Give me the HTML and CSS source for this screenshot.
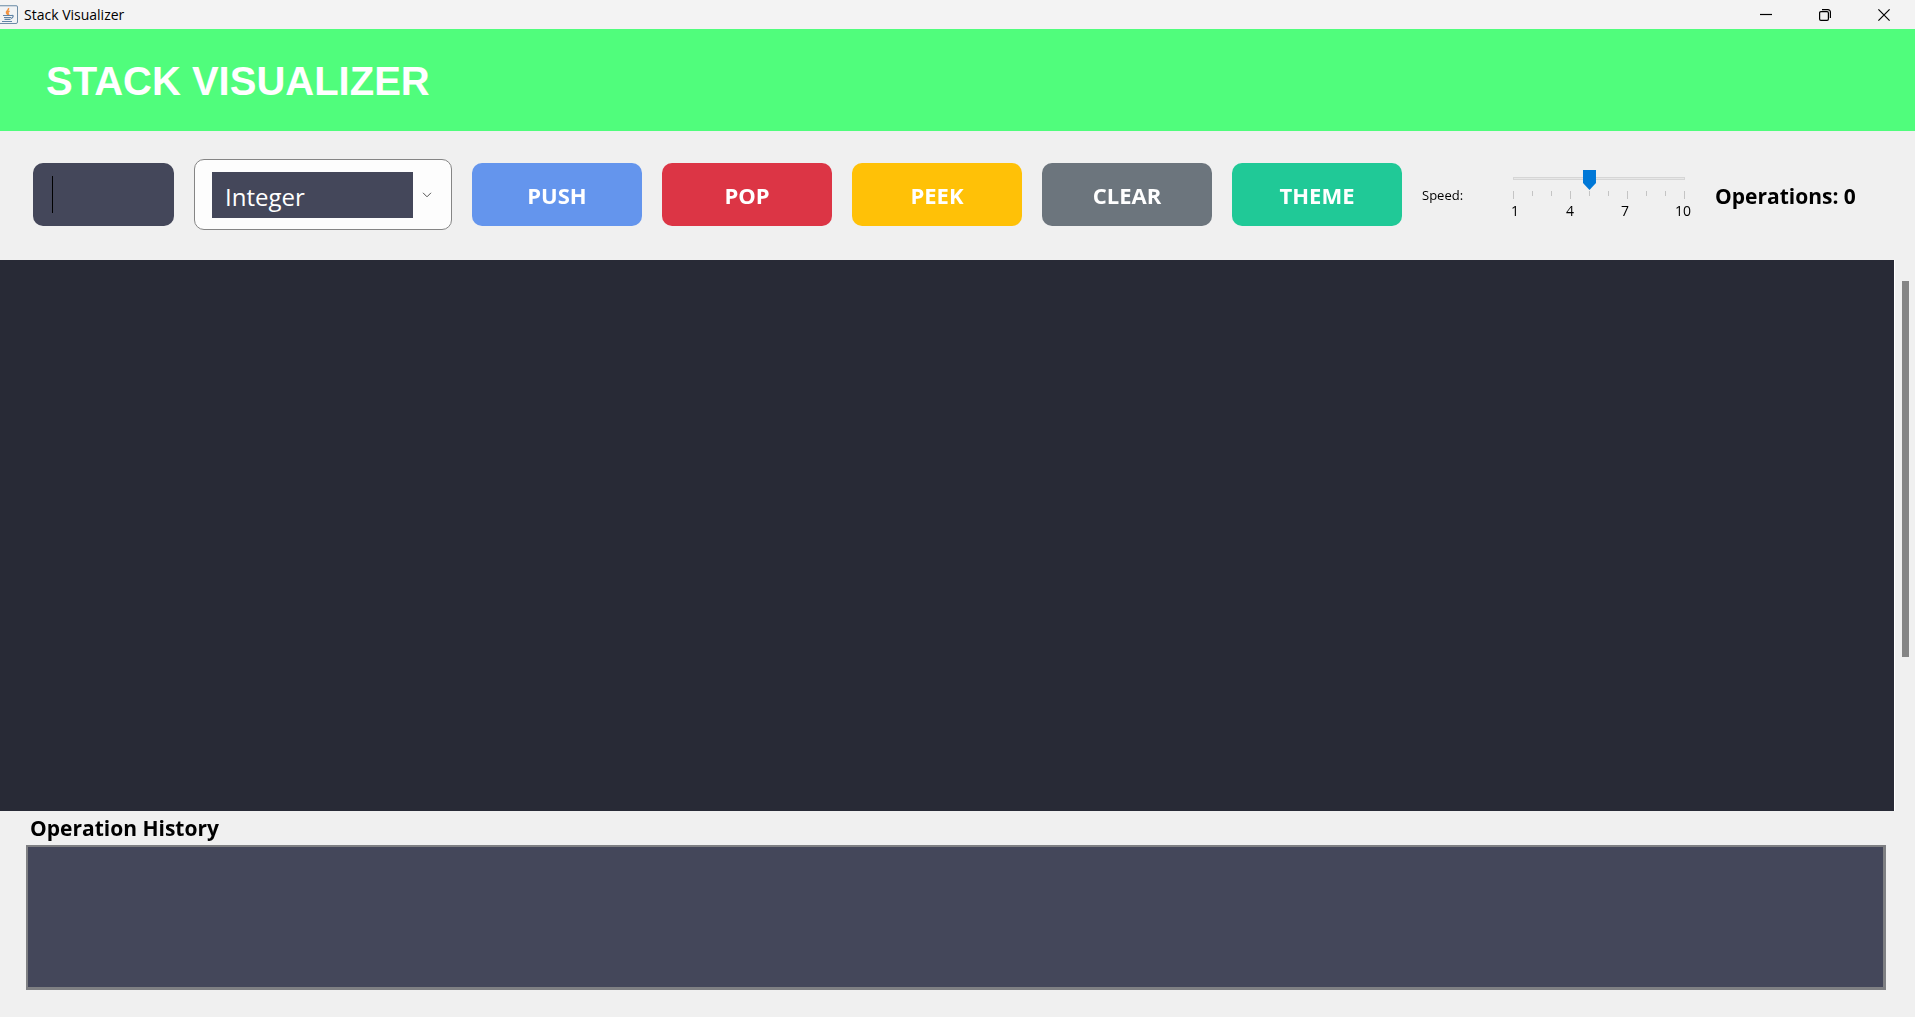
FILE: index.html
```html
<!DOCTYPE html>
<html lang="en">
<head>
<meta charset="utf-8">
<meta name="viewport" content="width=device-width, initial-scale=1">
<title>Stack Visualizer</title>
<link rel="stylesheet" href="styles.css">
</head>
<body>
<div class="titlebar">
  <svg class="app-icon" width="18" height="20" viewBox="0 0 18 20" aria-hidden="true">
    <rect x="-2" y=".5" width="19.500" height="18" rx="1.500" fill="#f1f3f5" stroke="#6d8ba6"/>
    <path d="M-1 1h18" stroke="#a9bccb"/>
    <path d="M8.500 3c1 2-3 3-2 5 .5 1 1.500 1.500 1.500 2.500M9.500 6c-2 1-2 2-.5 4" fill="none" stroke="#f0913f" stroke-width="1.500"/>
    <path d="M3 10.500h8.500M4 12.500h7M4.500 14.300h6M2 16.500h10M11.500 10.500c2.500-.5 2 2-.5 3" fill="none" stroke="#5f83a5" stroke-width="1.200"/>
  </svg>
  <span class="window-title">Stack Visualizer</span>
  <div class="window-controls">
    <button type="button" class="window-button" aria-label="Minimize"><svg width="12" height="12" viewBox="0 0 12 12"><path d="M0 5.500h12"/></svg></button>
    <button type="button" class="window-button" aria-label="Restore"><svg width="12" height="12" viewBox="0 0 12 12"><rect x=".6" y="2.600" width="8.800" height="8.800" rx="1.300"/><path d="M3 .6h6a2.400 2.400 0 0 1 2.400 2.400v6"/></svg></button>
    <button type="button" class="window-button" aria-label="Close"><svg width="12" height="12" viewBox="0 0 12 12"><path d="M.4.4l11.200 11.200M11.600.4L.4 11.600"/></svg></button>
  </div>
</div>

<header class="banner"><h1>STACK VISUALIZER</h1></header>

<form class="toolbar">
  <input class="value-input" type="text" aria-label="Value" autofocus>
  <div class="type-picker">
    <select class="type-select" aria-label="Value type">
      <option>Integer</option>
      <option>String</option>
    </select>
    <svg class="chevron" width="10" height="6" viewBox="0 0 10 6" aria-hidden="true"><path d="M1 .8l4 4 4-4"/></svg>
  </div>
  <button type="button" class="action push">PUSH</button>
  <button type="button" class="action pop">POP</button>
  <button type="button" class="action peek">PEEK</button>
  <button type="button" class="action clear">CLEAR</button>
  <button type="button" class="action theme">THEME</button>
  <label class="speed-label" for="speed">Speed:</label>
  <div class="speed">
    <input id="speed" class="slider" type="range" min="1" max="10" value="5">
    <div class="ticks" aria-hidden="true">
      <i class="major"></i><i></i><i></i><i class="major"></i><i></i><i></i><i class="major"></i><i></i><i></i><i class="major"></i>
    </div>
    <div class="tick-labels"><span>1</span><span>4</span><span>7</span><span>10</span></div>
  </div>
  <output class="count">Operations: 0</output>
</form>

<main class="workspace">
  <section class="stage" aria-label="Stack"></section>
  <div class="scrollbar"><div class="scroll-thumb"></div></div>
</main>

<section class="history">
  <label class="history-title" for="log">Operation History</label>
  <textarea id="log" class="history-log" readonly></textarea>
</section>
</body>
</html>
```
FILE: styles.css
```css
* {
  box-sizing: border-box;
}

body {
  display: flex;
  flex-direction: column;
  min-height: 100vh;
  margin: 0;
  background: #f0f0f0;
  color: #000;
  font-family: "Open Sans", "Noto Sans", sans-serif;
}

button,
input,
select,
textarea {
  margin: 0;
  padding: 0;
  border: 0;
  font: inherit;
}

.titlebar {
  display: flex;
  align-items: center;
  gap: 6px;
  height: 29px;
  padding-right: 2px;
  background: #f3f3f3;
  font-size: 14px;
}

.window-controls {
  display: flex;
  align-self: stretch;
  margin-left: auto;
}

.window-button {
  display: flex;
  align-items: center;
  justify-content: center;
  width: 59px;
  background: transparent;
}

.window-button svg {
  fill: none;
  stroke: #000;
  stroke-width: 1.2;
}

.banner {
  display: flex;
  align-items: center;
  height: 102px;
  padding: 2px 46px 0;
  background: #50fd7c;
  color: #fff;
  font-family: "Liberation Sans", Arial, sans-serif;
}

.banner h1 {
  margin: 0;
  font-size: 40px;
  line-height: 46px;
}

.toolbar {
  display: flex;
  flex-wrap: wrap;
  align-items: center;
  gap: 20px;
  min-height: 129px;
  padding: 0 32px 2px 33px;
}

/* The resting caret is a steady bar; typed text shows beside it. */
.value-input {
  width: 141px;
  height: 63px;
  padding: 0 19px;
  border-radius: 10px;
  outline: 0;
  background: linear-gradient(#000, #000) 19px 50% / 1px 37px no-repeat #44475a;
  color: #fff;
  caret-color: transparent;
  font-size: 28px;
}

.type-picker {
  display: flex;
  align-items: center;
  gap: 9px;
  width: 258px;
  height: 71px;
  padding: 0 17px;
  border: 1px solid #858585;
  border-radius: 10px;
  background: #fdfdfd;
}

.type-select {
  width: 201px;
  height: 46px;
  padding: 4px 13px 0;
  appearance: none;
  border-radius: 0;
  background: #44475a;
  color: #fff;
  font-size: 24px;
}

.chevron {
  fill: none;
  stroke: #555;
}

.action {
  width: 170px;
  height: 63px;
  border-radius: 10px;
  color: #fff;
  font-size: 22px;
  font-weight: 700;
}

.push { background: #6495ed; }
.pop { background: #dc3545; }
.peek { background: #ffc107; }
.clear { background: #6c757d; }
.theme { background: #20c997; }

.speed-label {
  width: 65px;
  font-size: 13px;
}

.speed {
  width: 184px;
  padding-top: 4px;
  font-size: 14px;
}

.slider {
  display: block;
  width: 100%;
  height: 20px;
  appearance: none;
  background:
    linear-gradient(#e7e7e7, #e7e7e7) 50% 8px / calc(100% - 14px) 1px no-repeat,
    linear-gradient(#d6d6d6, #d6d6d6) 50% 7px / calc(100% - 12px) 3px no-repeat;
}

.slider::-webkit-slider-thumb {
  width: 13px;
  height: 20px;
  appearance: none;
  background: #0078d7;
  clip-path: polygon(0 0, 100% 0, 100% 65%, 50% 100%, 0 65%);
}

.ticks {
  display: flex;
  justify-content: space-between;
  height: 8px;
  margin: 1px 6px 0;
}

.ticks i {
  width: 1px;
  height: 5px;
  background: #c4c4c4;
}

.ticks .major {
  height: 8px;
}

.tick-labels {
  display: flex;
  justify-content: space-between;
  padding-left: 3px;
  line-height: 24px;
}

.tick-labels span {
  width: 10px;
  text-align: center;
}

.tick-labels span:last-child {
  width: 16px;
}

.count {
  margin-left: 4px;
  padding-top: 2px;
  font-size: 21px;
  font-weight: 700;
  white-space: nowrap;
}

.workspace {
  display: flex;
  flex: 1;
  min-height: 240px;
}

.stage {
  flex: 1;
  border-right: 1px solid #fff;
  background: #282a36;
}

.scrollbar {
  width: 20px;
  padding: 21px 6px 0 7px;
}

.scroll-thumb {
  height: 71%;
  background: #858585;
}

.history {
  display: flex;
  flex-direction: column;
  padding: 0 29px 27px 26px;
}

.history-title {
  padding-left: 4px;
  font-size: 21px;
  font-weight: 700;
  line-height: 34px;
}

.history-log {
  height: 145px;
  border: 2px solid #7f8083;
  border-right-width: 3px;
  border-bottom-width: 3px;
  outline: 0;
  resize: none;
  background: #44475a;
  color: #fff;
}
```
